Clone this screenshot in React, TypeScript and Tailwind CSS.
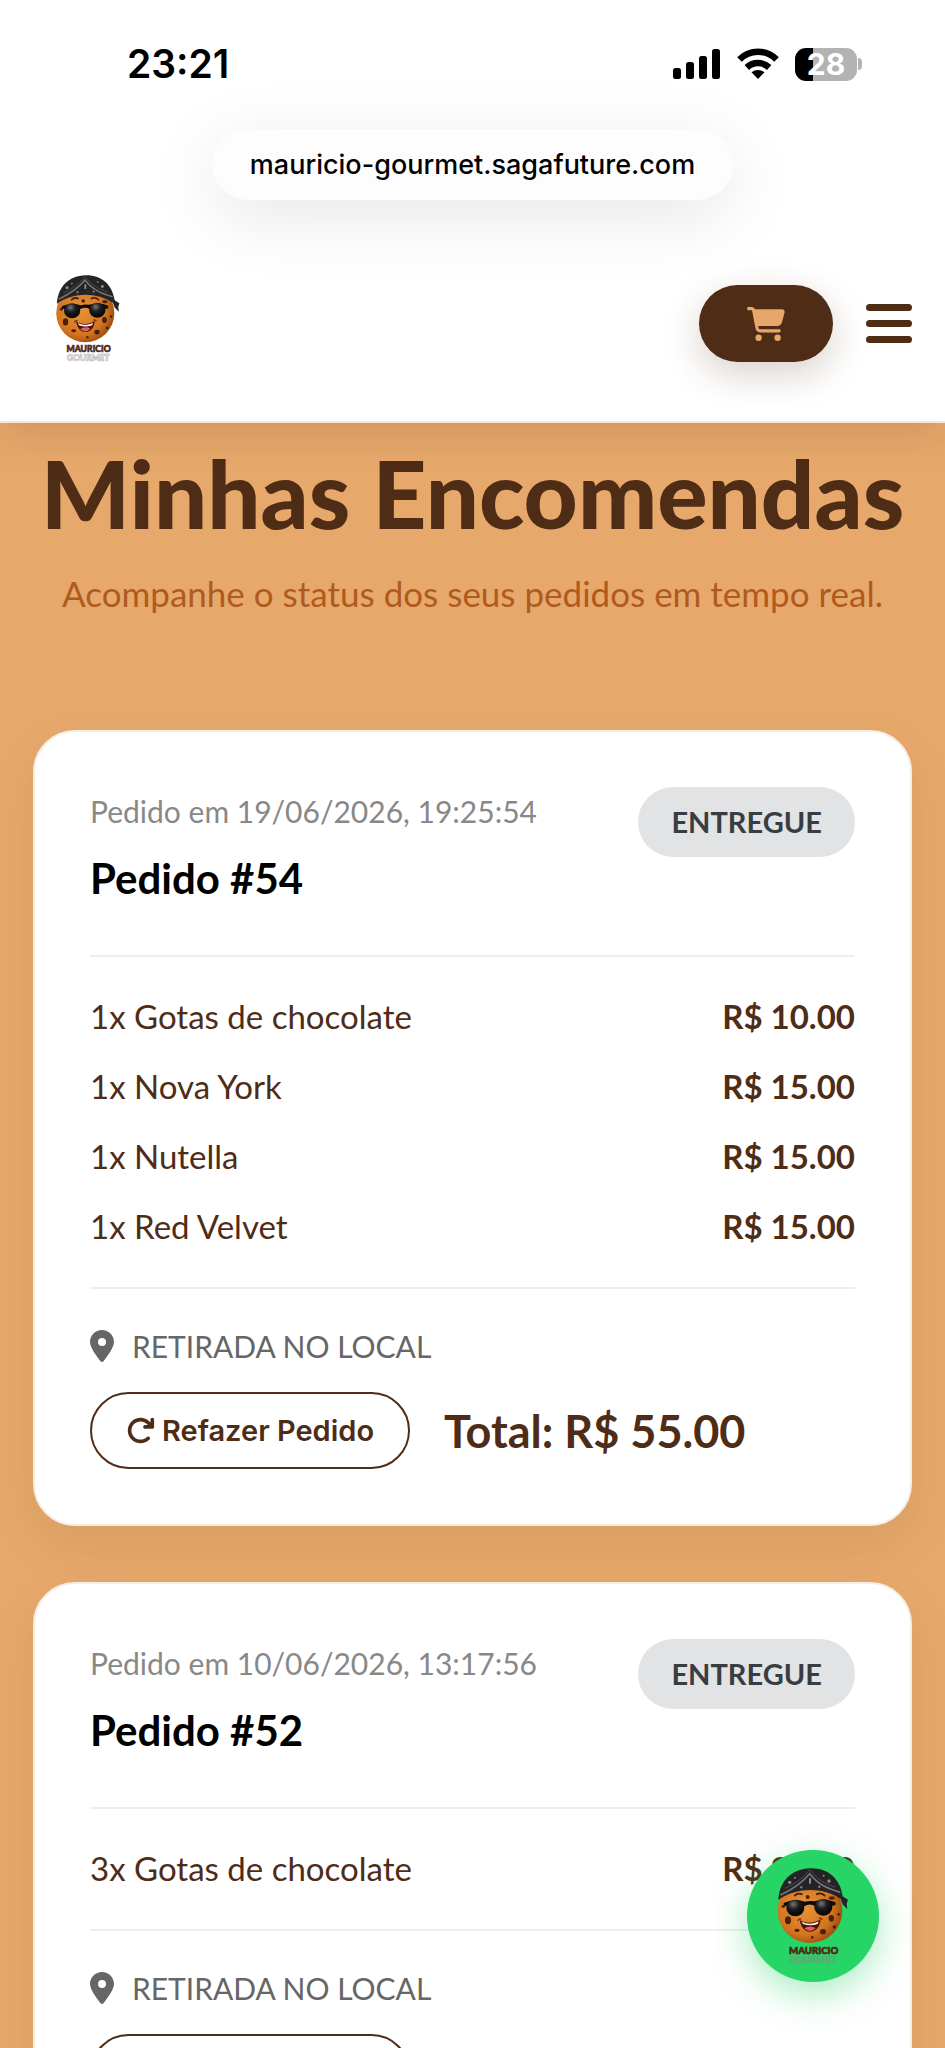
import React from 'react';
import { FaArrowRotateRight, FaCartShopping, FaLocationDot } from 'react-icons/fa6';

type Item = { qty: number; name: string; price: string };
type Order = { id: number; date: string; status: string; items: Item[]; total: string };

const orders: Order[] = [
  {
    id: 54,
    date: '19/06/2026, 19:25:54',
    status: 'ENTREGUE',
    items: [
      { qty: 1, name: 'Gotas de chocolate', price: '10.00' },
      { qty: 1, name: 'Nova York', price: '15.00' },
      { qty: 1, name: 'Nutella', price: '15.00' },
      { qty: 1, name: 'Red Velvet', price: '15.00' },
    ],
    total: '55.00',
  },
  {
    id: 52,
    date: '10/06/2026, 13:17:56',
    status: 'ENTREGUE',
    items: [{ qty: 3, name: 'Gotas de chocolate', price: '30.00' }],
    total: '30.00',
  },
];

function CookieLogo({ className, id }: { className: string; id: string }) {
  return (
    <svg viewBox="290 204 220 294" className={className} role="img" aria-label="Mauricio Gourmet">
      <defs>
        <radialGradient id={id} cx="0.42" cy="0.45" r="0.6">
          <stop offset="0" stopColor="#e8923a" />
          <stop offset="0.7" stopColor="#d4751f" />
          <stop offset="1" stopColor="#9c4c10" />
        </radialGradient>
        <radialGradient id={`${id}-lens`} cx="0.4" cy="0.28" r="0.6">
          <stop offset="0" stopColor="#77777b" />
          <stop offset="0.5" stopColor="#1e1e20" />
          <stop offset="1" stopColor="#09090a" />
        </radialGradient>
      </defs>
      <circle cx="391" cy="335" r="97" fill={`url(#${id})`} />
      <g fill="#4a1f0c">
        <ellipse cx="325" cy="364" rx="9" ry="12" />
        <ellipse cx="455" cy="358" rx="8" ry="10" />
        <ellipse cx="430" cy="398" rx="9" ry="8" />
        <ellipse cx="352" cy="394" rx="8" ry="5" />
        <circle cx="464" cy="384" r="5" />
        <circle cx="384" cy="294" r="6" />
        <circle cx="311" cy="322" r="5" />
        <circle cx="477" cy="346" r="4" />
        <circle cx="398" cy="415" r="4" />
        <ellipse cx="456" cy="297" rx="9" ry="5" />
      </g>
      <path d="M345 290q10-10 22-4M411 286q13-7 24 4" fill="none" stroke="#3a1a0a" strokeWidth="5" strokeLinecap="round" />
      <path d="M296 303c4-58 40-93 96-95 54-1 90 32 97 84l16 10-4 12 2 16-14-14-6-16c-52-36-132-36-187 3z" fill="#242426" />
      <path d="M302 288c30-14 60-30 88-64 26 34 58 46 92 56" fill="none" stroke="#77777b" strokeWidth="5" />
      <path d="M316 268c26-12 48-24 74-56 24 30 44 42 76 52" fill="none" stroke="#4d4d51" strokeWidth="3" />
      <g fill="#8b8b90">
        <circle cx="330" cy="250" r="5" />
        <circle cx="346" cy="236" r="3" />
        <circle cx="448" cy="246" r="5" />
        <circle cx="432" cy="230" r="3" />
        <path d="M388 238h6v16h-6zM362 262h6v6h-6zM416 260h6v6h-6z" />
      </g>
      <path d="M312 312q30-14 64-4 14-4 28-1 34-10 64 3l-1 9-16 3-46-1q-14-9-30 0l-46 1-16-2z" fill="#0c0c0d" />
      <ellipse cx="347" cy="327" rx="27" ry="25" fill={`url(#${id}-lens)`} />
      <ellipse cx="431" cy="325" rx="27" ry="25" fill={`url(#${id}-lens)`} />
      <path d="M360 363c18 11 42 11 63-2-3 24-15 37-32 37s-27-14-31-35z" fill="#4a120b" />
      <path d="M366 368c16 8 34 8 51-1l-3 8q-22 8-44 0z" fill="#fff4e6" />
      <path d="M374 388q17-11 34-1-17 18-34 1z" fill="#e0605a" />
      <path d="M355 364q3-5 8-4M427 361q-3-5-8-3" fill="none" stroke="#6b2d0e" strokeWidth="4" strokeLinecap="round" />
      <text x="402" y="466" textAnchor="middle" fontFamily="Lato, sans-serif" fontSize="29" fontWeight="900" fill="#4e2a15" stroke="#4e2a15" strokeWidth="2">
        MAURICIO
      </text>
      <text x="401" y="493" textAnchor="middle" fontFamily="Lato, sans-serif" fontSize="28" fontWeight="900" fill="none" stroke="#8c8585" strokeOpacity="0.7" strokeWidth="2">
        GOURMET
      </text>
    </svg>
  );
}

function StatusBar() {
  return (
    <div className="flex items-center justify-between pt-11 pr-[83px] pl-[127px] font-['Inter',sans-serif] text-black">
      <span className="text-[39px] leading-10 font-semibold">23:21</span>
      <div className="flex items-center gap-4">
        <svg viewBox="0 0 48 32" className="h-8 w-12" fill="#000" aria-hidden="true">
          <rect x="0" y="20" width="8" height="11" rx="2.5" />
          <rect x="13" y="14" width="8" height="17" rx="2.5" />
          <rect x="26" y="8" width="8" height="23" rx="2.5" />
          <rect x="39" y="1" width="8" height="30" rx="2.5" />
        </svg>
        <svg viewBox="0 0 42 32" className="h-8 w-[42px]" fill="none" stroke="#000" strokeWidth="6.500" aria-hidden="true">
          <path d="M2.500 11.500a26 26 0 0 1 37 0" />
          <path d="M9.800 19.500a16.500 16.500 0 0 1 22.400 0" />
          <path d="M21 31l-6.500-6.700a10 10 0 0 1 13 0z" fill="#000" stroke="none" />
        </svg>
        <div className="flex items-center gap-px">
          <div className="flex h-[33px] w-[62px] items-center justify-center rounded-[11px] bg-linear-to-r from-black from-[18px] to-[#b3b3b3] to-[18px]">
            <span className="text-[30px] leading-8 font-bold text-white">28</span>
          </div>
          <div className="h-3 w-1 rounded-r-full bg-[#b3b3b3]" />
        </div>
      </div>
    </div>
  );
}

function OrderCard({ order }: { order: Order }) {
  return (
    <article className="rounded-[42px] border-2 border-[#f6ede4] bg-white p-[55px] shadow-[0_20px_50px_rgba(78,44,22,0.09)]">
      <header className="flex items-start justify-between border-b-2 border-[#eeeeee] pb-[50px]">
        <div>
          <p className="text-[30px] leading-[48px] text-[#888888]">Pedido em {order.date}</p>
          <h2 className="mt-[17px] text-[42px] leading-[53px] font-bold text-black">Pedido #{order.id}</h2>
        </div>
        <span className="rounded-full bg-[#e2e3e5] px-[33px] text-[29px] leading-[70px] font-bold text-[#383d41]">
          {order.status}
        </span>
      </header>
      <ul className="flex flex-col gap-7 border-b-2 border-[#eeeeee] pt-[38px] pb-10 text-[33px] leading-[42px] text-[#4e2c16]">
        {order.items.map((item) => (
          <li key={item.name} className="flex justify-between">
            <span>
              {item.qty}x {item.name}
            </span>
            <span className="font-bold">R$ {item.price}</span>
          </li>
        ))}
      </ul>
      <footer className="pt-9 text-[#4e2c16]">
        <p className="flex items-center gap-[18px] text-[30px] leading-[42px] text-[#666666]">
          <FaLocationDot className="h-8 w-6" />
          RETIRADA NO LOCAL
        </p>
        <div className="mt-[25px] flex items-center gap-[34px]">
          <button
            type="button"
            className="flex h-[77px] items-center gap-[7px] rounded-full border-2 border-[#4e2c16] px-[34px] font-['Inter',sans-serif] text-[29px] font-semibold"
          >
            <FaArrowRotateRight className="size-[29px]" />
            Refazer Pedido
          </button>
          <strong className="text-[45px] leading-[56px] font-bold">Total: R$ {order.total}</strong>
        </div>
      </footer>
    </article>
  );
}

export default function App() {
  return (
    <div className="relative flex h-screen flex-col overflow-hidden bg-[#e7a96b] font-['Lato',sans-serif]">
      <header className="relative z-10 shrink-0 border-b-2 border-[#f6e6d8] bg-white shadow-[0_10px_40px_rgba(78,44,22,0.16)]">
        <StatusBar />
        <div className="mt-[45px] flex justify-center">
          <div className="rounded-full bg-[#fdfdfd] px-[38px] font-['Inter',sans-serif] text-[27px] leading-[71px] font-medium text-black shadow-[0_16px_70px_rgba(0,0,0,0.1)]">
            mauricio-gourmet.sagafuture.com
          </div>
        </div>
        <nav className="flex items-end justify-between pt-[74px] pr-[33px] pb-[59px] pl-[55px]">
          <a href="#inicio">
            <CookieLogo id="cookie-nav" className="h-[88px] w-[66px]" />
          </a>
          <div className="flex items-center gap-[33px]">
            <button
              type="button"
              aria-label="Carrinho"
              className="flex h-[77px] w-[134px] items-center justify-center rounded-full bg-[#4e2c16] text-[#e6a86a] shadow-[0_12px_36px_rgba(78,44,22,0.22)]"
            >
              <FaCartShopping className="h-[34px] w-[38px]" />
            </button>
            <button type="button" aria-label="Menu" className="flex flex-col gap-[9px]">
              <span className="h-[7px] w-[46px] rounded-full bg-[#4e2c16]" />
              <span className="h-[7px] w-[46px] rounded-full bg-[#4e2c16]" />
              <span className="h-[7px] w-[46px] rounded-full bg-[#4e2c16]" />
            </button>
          </div>
        </nav>
      </header>

      <main className="shrink-0 px-[33px] pt-[14px]">
        <div className="text-center">
          <h1 className="text-[94px] leading-[112px] font-black whitespace-nowrap text-[#4e2c16]">Minhas Encomendas</h1>
          <p className="mt-5 text-[35px] leading-[48px] text-[#b05a20]">
            Acompanhe o status dos seus pedidos em tempo real.
          </p>
        </div>
        <div className="mt-[113px] flex flex-col gap-14">
          {orders.map((order) => (
            <OrderCard key={order.id} order={order} />
          ))}
        </div>
      </main>

      <a
        href="#contato"
        className="absolute right-[66px] bottom-[66px] z-20 flex size-[132px] items-center justify-center rounded-full bg-[#27d466] shadow-[0_12px_36px_rgba(37,211,102,0.4)]"
      >
        <CookieLogo id="cookie-fab" className="h-[98px] w-[74px]" />
      </a>
    </div>
  );
}
